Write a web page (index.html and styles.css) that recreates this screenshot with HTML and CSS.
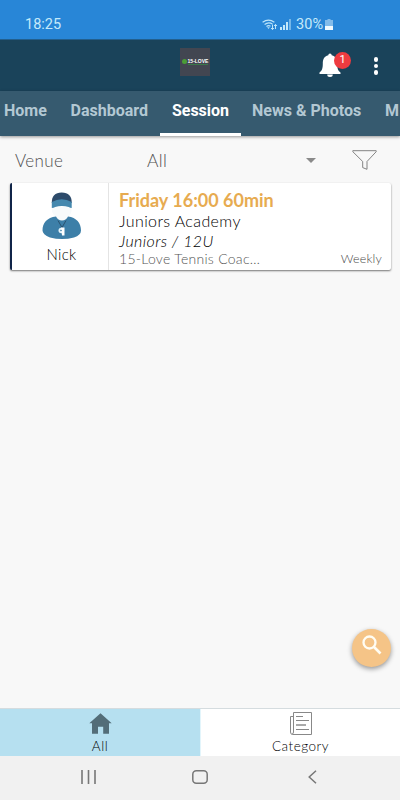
FILE: index.html
```html
<!DOCTYPE html>
<html lang="en">
<head>
<meta charset="utf-8">
<title>Session</title>
<link rel="stylesheet" href="styles.css">
</head>
<body>
<div class="app">
  <div class="status">
    <span class="clock">18:25</span>
    <div class="status-icons">
      <svg class="wifi" width="16" height="12" viewBox="0 0 16 12" fill="none" stroke="#bde5fa">
        <path d="M.6 3.3Q6.5-1.2 12.4 3.3M2.6 5.5Q6.5 2.5 10.4 5M4.5 7.5Q6.5 6 8.5 7.2" stroke-width="1.2"/>
        <path d="M5.2 8.2h2.6L6.5 10z" fill="#bde5fa" stroke="none"/>
        <path d="M10.5 5.5v5M9 9l1.5 1.6L12 9M13.5 10V5.500M12 7l1.500-1.600L15 7" stroke-width="1"/>
      </svg>
      <svg class="signal" width="11" height="11" viewBox="0 0 11 11" fill="#c3e8fa">
        <path d="M0 8h2v3H0zM3 6h2v5H3zM6 3h2v8H6z"/><path d="M9 0h2v11H9z" opacity=".5"/>
      </svg>
      <span class="percent">30%</span>
      <svg class="battery" width="8" height="11" viewBox="0 0 8 11">
        <path d="M2.500 0h3v1H8v6H0V1h2.500z" fill="#82bbea"/><path d="M0 7h8v4H0z" fill="#f1faff"/>
      </svg>
    </div>
  </div>
  <header class="toolbar">
    <div class="logo"><span class="ball"></span><span class="logo-name">15-LOVE</span></div>
    <div class="bell">
      <svg width="22" height="24" viewBox="0 0 22 24" fill="#fff">
        <path d="M9.300 2.200a1.700 1.700 0 0 1 3.400 0C17 3.200 18.200 6.700 18.200 10.500c0 5 .8 7.300 3.300 9V21H.5v-1.500c2.500-1.700 3.300-4 3.300-9 0-3.800 1.200-7.300 5.500-8.300zM8.200 21.500h5.600a2.800 2.500 0 0 1-5.600 0z"/>
      </svg>
      <span class="badge">1</span>
    </div>
    <div class="more"><i></i><i></i><i></i></div>
  </header>
  <nav class="tabs">
    <span class="tab home">Home</span>
    <span class="tab dashboard">Dashboard</span>
    <span class="tab session">Session</span>
    <span class="tab news">News &amp; Photos</span>
    <span class="tab members">M</span>
  </nav>
  <main>
    <div class="filters">
      <span class="venue">Venue</span>
      <span class="choice">All</span>
      <svg class="arrow" width="10" height="5" viewBox="0 0 10 5"><path d="M0 0h10L5 5z" fill="#8a8a8a"/></svg>
      <svg class="funnel" width="25" height="20" viewBox="0 0 25 20" fill="none" stroke="#777" stroke-width=".9"><path d="M.8.7h23.400v1L15 11.500v7.800l-4.300-1.700v-6.100L.8 1.700z"/></svg>
    </div>
    <article class="card">
      <div class="coach">
        <svg width="40" height="48" viewBox="0 0 40 48">
          <path d="M10 15Q9 21 13 24l1 5q6 7 12 0l1-5q3.500-4 2.500-9z" fill="#f7fafb"/>
          <path d="M9.800 11C9.500 4.500 13 .5 19.700.5S30 4.500 29.700 11z" fill="#2d4b6b"/>
          <path d="M9.800 10Q19.700 4.500 29.700 10v6q-1.700 0-3-1-7-2-13.500 0-1.500 1-3.400 1z" fill="#4488ae"/>
          <path d="M14 24.500C5 25.500.5 31 .5 38.500.500 41 3 43.500 8 45.500q12 3 24 0 7-2.500 7-7C39 31 34.500 25.500 26 24.500q-2 4-6 4t-6-4z" fill="#3d7fa8"/>
          <path d="M16 28.500l4 7 4-7" fill="none" stroke="#25455f" stroke-width=".8"/>
          <circle cx="19.300" cy="38.500" r="2.800" fill="#e3f2fa"/><path d="M19 35.500h3.500v8H20z" fill="#fff"/>
          <circle cx="19" cy="38.500" r=".8" fill="#3d7fa8"/>
        </svg>
        <span class="coach-name">Nick</span>
      </div>
      <div class="details">
        <div class="time">Friday 16:00 60min</div>
        <div class="title">Juniors Academy</div>
        <div class="group">Juniors / 12U</div>
        <div class="foot"><span class="club">15-Love Tennis Coac…</span><span class="weekly">Weekly</span></div>
      </div>
    </article>
    <div class="fab">
      <svg width="20" height="20" viewBox="0 0 20 20" fill="none" stroke="#fffdf3"><circle cx="7.500" cy="7.500" r="6" stroke-width="2.300"/><path d="M12 12l6.500 6.500" stroke-width="2.700"/></svg>
    </div>
  </main>
  <nav class="bottom">
    <div class="item active">
      <svg width="23" height="21" viewBox="0 0 23 21"><path d="M11.500.3l11.200 9.900H20v10.500h-5.800v-7H9v7H3V10.200H.3z" fill="#536d78"/></svg>
      <span class="all-label">All</span>
    </div>
    <div class="item category">
      <svg width="22" height="23" viewBox="0 0 22 23" fill="none" stroke="#888"><path d="M3.500.5h18v22H2.500Q.5 22.500.5 20V4.500h3M3.500.5v19.500q0 2-1.500 2"/><path d="M6 4.500h7M6 8.500h13M6 17.500h13"/><path d="M6 13h10" stroke="#555"/></svg>
      <span class="category-label">Category</span>
    </div>
  </nav>
  <footer class="system">
    <svg class="recents" width="15" height="14" viewBox="0 0 15 14" stroke="#777" stroke-width="1.600"><path d="M1 0v14M7.500 0v14M14 0v14"/></svg>
    <svg class="home-key" width="16" height="14" viewBox="0 0 16 14" fill="none" stroke="#777" stroke-width="1.500"><rect x=".8" y=".8" width="14.400" height="12.400" rx="3.500"/></svg>
    <svg class="back" width="9" height="14" viewBox="0 0 9 14" fill="none" stroke="#777" stroke-width="1.500"><path d="M8 .7L1.200 7 8 13.300"/></svg>
  </footer>
</div>
</body>
</html>
```
FILE: styles.css
```css
* { box-sizing: border-box; }
body { margin: 0; font-family: Lato, sans-serif; }
svg { display: block; flex: none; }
.app { width: 400px; height: 800px; display: flex; flex-direction: column; overflow: hidden; background: #f8f8f8; white-space: nowrap; }
.status { height: 40px; flex: none; background: #2886d7; display: flex; justify-content: space-between; padding: 16px 67px 0 25px; font: 14.500px/18px Roboto, sans-serif; color: #c5eafa; border-bottom: 1px solid #225f8e; }
.status-icons { display: flex; align-items: flex-start; }
.wifi { margin: 3px 2px 0 0; }
.signal { margin: 3px 5px 0 0; }
.battery { margin: 3px 0 0 2px; }
.toolbar { height: 51px; flex: none; background: #1a435a; display: flex; padding: 8px 22px 0 180px; }
.logo { width: 30px; height: 28px; background: #424651; display: flex; align-items: center; justify-content: center; gap: 1px; font: bold 5px/5px "Liberation Sans", sans-serif; color: #fff; padding-bottom: 1px; }
.ball { width: 5px; height: 5px; border-radius: 50%; background: #4b9d36; }
.logo-name { border-bottom: 1px solid #397849; letter-spacing: 0; }
.bell { position: relative; margin: 5px 0 0 109px; }
.badge { position: absolute; left: 15px; top: -1px; width: 17px; height: 17px; border-radius: 50%; background: #ee3b40; color: #fff; text-align: center; font: 11px/16px Roboto, sans-serif; }
.more { margin: 9px 0 0 auto; display: flex; flex-direction: column; gap: 2px; }
.more i { width: 4.500px; height: 4.500px; border-radius: 50%; background: #fff; }
.tabs { height: 45px; flex: none; background: #365a6f; display: flex; position: relative; box-shadow: 0 1px 3px #0006; font: bold 16px/40px Roboto, sans-serif; color: #b3c8d3; }
.tab { flex: none; height: 45px; }
.home { width: 66px; padding-left: 4px; }
.dashboard { width: 94px; padding-left: 4.500px; }
.session { width: 81px; text-align: center; color: #fff; border-bottom: 3px solid #fff; }
.news { width: 144px; padding-left: 11px; }
main { flex: 1; position: relative; }
.filters { height: 47px; display: flex; align-items: flex-start; padding: 14px 23px 0 15px; font-size: 17px; line-height: 22px; font-weight: 300; color: #505050; }
.venue { width: 132px; letter-spacing: .35px; }
.choice { width: 159px; font-size: 17.500px; letter-spacing: .3px; }
.arrow { margin-top: 8px; }
.funnel { margin-left: auto; }
.card { margin: 0 9px 0 10px; height: 87px; background: #fff; border-left: 2px solid #102448; border-radius: 2px; box-shadow: 0 1px 2px #0008; display: flex; }
.coach { width: 97px; border-right: 1px solid #e4e4e4; padding-top: 9px; display: flex; flex-direction: column; align-items: center; }
.coach svg { margin-left: 3px; }
.coach-name { margin: 5px 0 0 3px; font-size: 15px; line-height: 18px; font-weight: 300; letter-spacing: .3px; color: #000; }
.details { flex: 1; padding: 6px 9px 0 10px; }
.time { font-size: 18px; line-height: 22px; font-weight: 700; letter-spacing: 0; color: #e7ab50; }
.title { font-size: 16px; line-height: 20px; font-weight: 300; letter-spacing: .38px; color: #000; }
.group { font-size: 16px; line-height: 19px; font-weight: 300; letter-spacing: .4px; font-style: italic; color: #000; }
.foot { display: flex; justify-content: space-between; font-size: 14px; line-height: 18px; font-weight: 300; letter-spacing: .28px; color: #555; }
.weekly { font-size: 12.500px; letter-spacing: .2px; color: #444; }
.fab { position: absolute; left: 352px; top: 493px; width: 39px; height: 38px; border-radius: 50%; background: #f5c487; box-shadow: 0 2px 5px #0006; padding: 6px 0 0 10px; }
.bottom { height: 48px; flex: none; border-top: 1px solid #d5dcdf; display: flex; }
.item { width: 200px; background: #fff; display: flex; flex-direction: column; align-items: center; padding-top: 4px; font-size: 13.500px; line-height: 16px; font-weight: 300; letter-spacing: .5px; color: #000; }
.active { background: #b6e0f0; }
.active svg { margin-bottom: 4px; }
.category { padding-top: 3px; border-left: 1px solid #e3f5fb; }
.category svg { margin-bottom: 3px; }
.system { height: 44px; flex: none; background: #f1f1f1; display: flex; padding: 14px 0 0 81px; }
.home-key { margin-left: 96px; }
.back { margin-left: 100px; }
```
